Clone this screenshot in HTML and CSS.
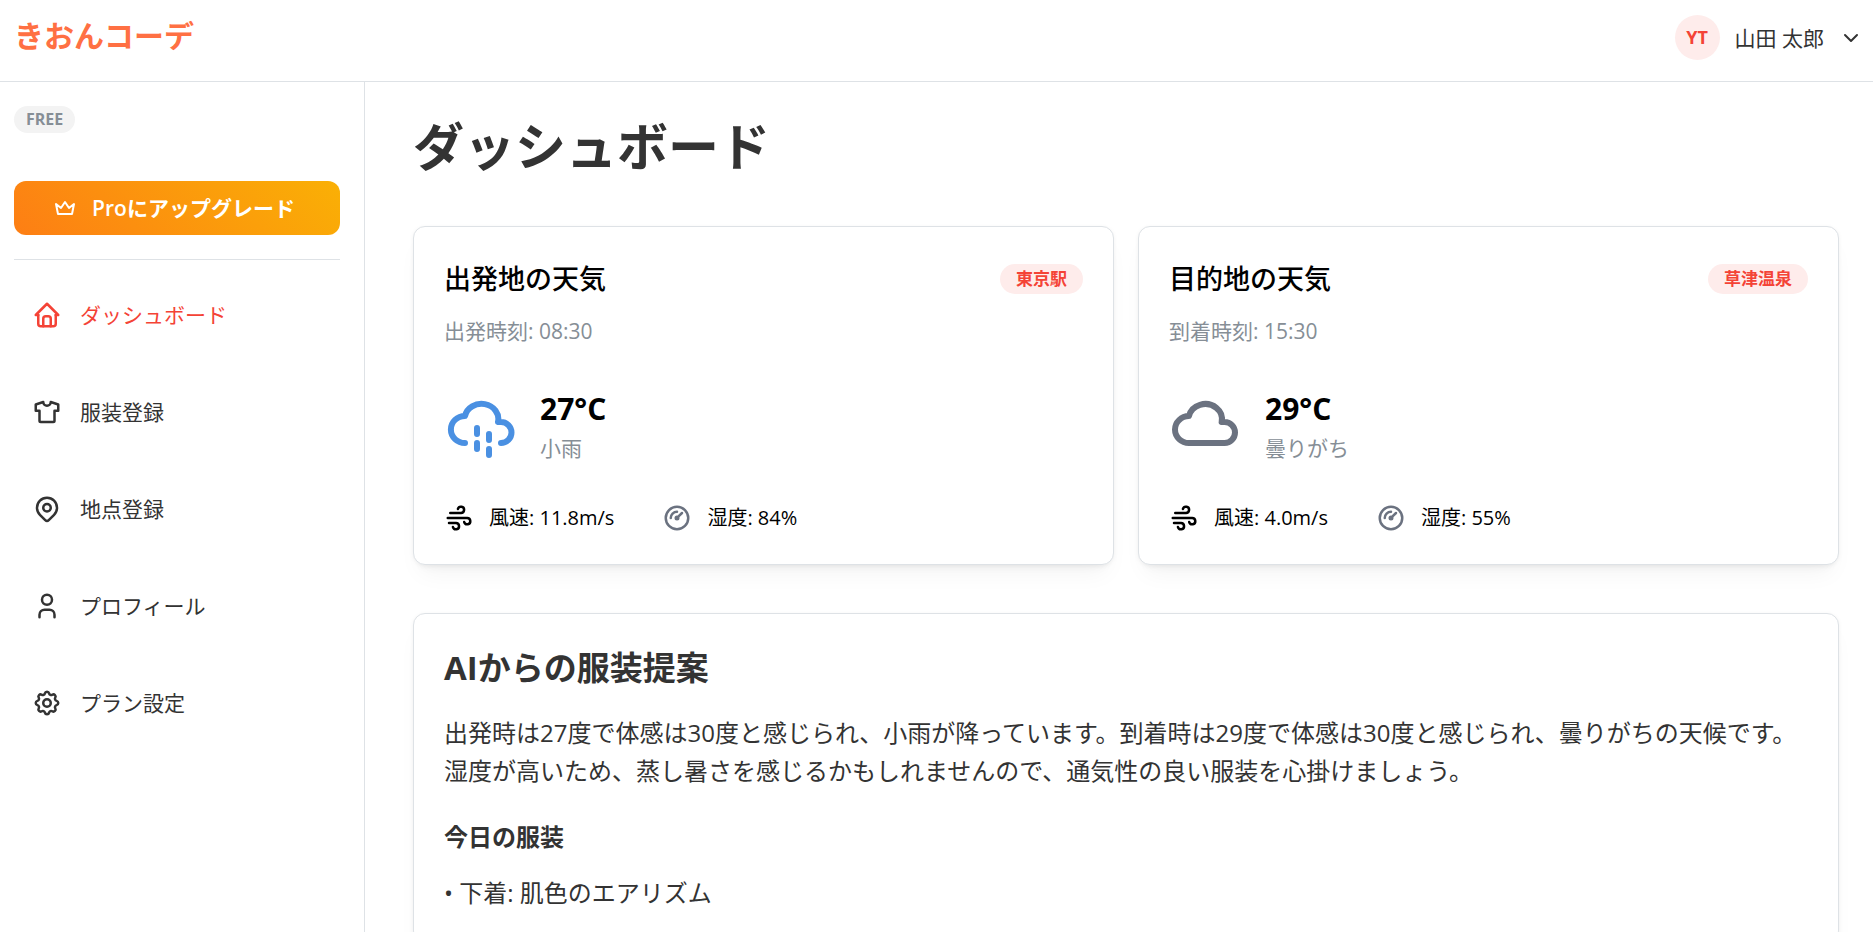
FILE: index.html
```html
<!DOCTYPE html>
<html lang="ja">
<head>
    <meta charset="UTF-8">
    <meta name="viewport" content="width=device-width, initial-scale=1.0">
    <title>きおんコーデ</title>
    <link rel="stylesheet" href="styles.css">
</head>
<body>

<header class="header">
    <a class="logo" href="#">きおんコーデ</a>
    <button class="user-menu" type="button">
        <span class="avatar">YT</span>
        <span class="user-name">山田 太郎</span>
        <svg class="icon icon-sm" viewBox="0 0 24 24"><path d="M6 9l6 6l6 -6"/></svg>
    </button>
</header>

<div class="layout">
    <aside class="sidebar">
        <span class="badge badge-plan">FREE</span>
        <button class="upgrade-button" type="button">
            <svg class="icon icon-sm" viewBox="0 0 24 24"><path d="M12 6l4 6l5 -4l-2 10h-14l-2 -10l5 4z"/></svg>
            Proにアップグレード
        </button>
        <hr class="divider">
        <nav class="nav">
            <a class="nav-link active" href="#">
                <svg class="icon" viewBox="0 0 24 24">
                    <path d="M5 12l-2 0l9 -9l9 9l-2 0"/>
                    <path d="M5 12v7a2 2 0 0 0 2 2h10a2 2 0 0 0 2 -2v-7"/>
                    <path d="M9 21v-6a2 2 0 0 1 2 -2h2a2 2 0 0 1 2 2v6"/>
                </svg>
                ダッシュボード
            </a>
            <a class="nav-link" href="#">
                <svg class="icon" viewBox="0 0 24 24">
                    <path d="M15 4l6 2v5h-3v8a1 1 0 0 1 -1 1h-10a1 1 0 0 1 -1 -1v-8h-3v-5l6 -2a3 3 0 0 0 6 0"/>
                </svg>
                服装登録
            </a>
            <a class="nav-link" href="#">
                <svg class="icon" viewBox="0 0 24 24">
                    <path d="M9 11a3 3 0 1 0 6 0a3 3 0 0 0 -6 0"/>
                    <path d="M17.657 16.657l-4.243 4.243a2 2 0 0 1 -2.827 0l-4.244 -4.243a8 8 0 1 1 11.314 0z"/>
                </svg>
                地点登録
            </a>
            <a class="nav-link" href="#">
                <svg class="icon" viewBox="0 0 24 24">
                    <path d="M8 7a4 4 0 1 0 8 0a4 4 0 0 0 -8 0"/>
                    <path d="M6 21v-2a4 4 0 0 1 4 -4h4a4 4 0 0 1 4 4v2"/>
                </svg>
                プロフィール
            </a>
            <a class="nav-link" href="#">
                <svg class="icon" viewBox="0 0 24 24">
                    <path d="M10.325 4.317c.426 -1.756 2.924 -1.756 3.35 0a1.724 1.724 0 0 0 2.573 1.066c1.543 -.94 3.31 .826 2.37 2.37a1.724 1.724 0 0 0 1.065 2.572c1.756 .426 1.756 2.924 0 3.35a1.724 1.724 0 0 0 -1.066 2.573c.94 1.543 -.826 3.31 -2.37 2.37a1.724 1.724 0 0 0 -2.572 1.065c-.426 1.756 -2.924 1.756 -3.35 0a1.724 1.724 0 0 0 -2.573 -1.066c-1.543 .94 -3.31 -.826 -2.37 -2.37a1.724 1.724 0 0 0 -1.065 -2.572c-1.756 -.426 -1.756 -2.924 0 -3.35a1.724 1.724 0 0 0 1.066 -2.573c-.94 -1.543 .826 -3.31 2.37 -2.37c1 .608 2.296 .07 2.572 -1.065z"/>
                    <path d="M9 12a3 3 0 1 0 6 0a3 3 0 0 0 -6 0"/>
                </svg>
                プラン設定
            </a>
        </nav>
    </aside>

    <main class="main">
        <h1>ダッシュボード</h1>

        <div class="weather-grid">
            <section class="card">
                <div class="card-head">
                    <h2 class="card-title">出発地の天気</h2>
                    <span class="badge">東京駅</span>
                </div>
                <p class="dimmed">出発時刻: 08:30</p>
                <div class="weather">
                    <svg class="icon icon-weather rain" viewBox="0 0 24 24">
                        <path d="M7 18a4.6 4.4 0 0 1 0 -9a5 4.5 0 0 1 11 2h1a3.5 3.5 0 0 1 0 7"/>
                        <path d="M11 13v2m0 3v2m4 -5v2m0 3v2"/>
                    </svg>
                    <div>
                        <p class="temperature">27°C</p>
                        <p class="condition">小雨</p>
                    </div>
                </div>
                <div class="metrics">
                    <div class="metric">
                        <svg class="icon" viewBox="0 0 24 24">
                            <path d="M5 8h8.5a2.5 2.5 0 1 0 -2.34 -3.24"/>
                            <path d="M3 12h15.5a2.5 2.5 0 1 1 -2.34 3.24"/>
                            <path d="M4 16h5.5a2.5 2.5 0 1 1 -2.34 3.24"/>
                        </svg>
                        風速: 11.8m/s
                    </div>
                    <div class="metric">
                        <svg class="icon gray" viewBox="0 0 24 24">
                            <path d="M3 12a9 9 0 1 0 18 0a9 9 0 1 0 -18 0"/>
                            <path d="M11 12a1 1 0 1 0 2 0a1 1 0 1 0 -2 0"/>
                            <path d="M13.41 10.59l2.59 -2.59"/>
                            <path d="M7 12a5 5 0 0 1 5 -5"/>
                        </svg>
                        湿度: 84%
                    </div>
                </div>
            </section>

            <section class="card">
                <div class="card-head">
                    <h2 class="card-title">目的地の天気</h2>
                    <span class="badge">草津温泉</span>
                </div>
                <p class="dimmed">到着時刻: 15:30</p>
                <div class="weather">
                    <svg class="icon icon-weather gray" viewBox="0 0 24 24">
                        <path d="M6.657 18c-2.572 0 -4.657 -2.007 -4.657 -4.483c0 -2.475 2.085 -4.482 4.657 -4.482c.393 -1.762 1.794 -3.2 3.675 -3.773c1.88 -.572 3.956 -.193 5.444 1c1.488 1.19 2.162 3.007 1.77 4.769h.99c1.913 0 3.464 1.56 3.464 3.486c0 1.927 -1.551 3.487 -3.465 3.487h-11.878"/>
                    </svg>
                    <div>
                        <p class="temperature">29°C</p>
                        <p class="condition">曇りがち</p>
                    </div>
                </div>
                <div class="metrics">
                    <div class="metric">
                        <svg class="icon" viewBox="0 0 24 24">
                            <path d="M5 8h8.5a2.5 2.5 0 1 0 -2.34 -3.24"/>
                            <path d="M3 12h15.5a2.5 2.5 0 1 1 -2.34 3.24"/>
                            <path d="M4 16h5.5a2.5 2.5 0 1 1 -2.34 3.24"/>
                        </svg>
                        風速: 4.0m/s
                    </div>
                    <div class="metric">
                        <svg class="icon gray" viewBox="0 0 24 24">
                            <path d="M3 12a9 9 0 1 0 18 0a9 9 0 1 0 -18 0"/>
                            <path d="M11 12a1 1 0 1 0 2 0a1 1 0 1 0 -2 0"/>
                            <path d="M13.41 10.59l2.59 -2.59"/>
                            <path d="M7 12a5 5 0 0 1 5 -5"/>
                        </svg>
                        湿度: 55%
                    </div>
                </div>
            </section>
        </div>

        <section class="card suggestion">
            <h2>AIからの服装提案</h2>
            <p>出発時は27度で体感は30度と感じられ、小雨が降っています。到着時は29度で体感は30度と感じられ、曇りがちの天候です。<br>湿度が高いため、蒸し暑さを感じるかもしれませんので、通気性の良い服装を心掛けましょう。</p>
            <h3>今日の服装</h3>
            <p>• 下着: 肌色のエアリズム</p>
        </section>
    </main>
</div>

</body>
</html>
```
FILE: styles.css
```css
* {
    box-sizing: border-box;
}

body {
    font-family: "Open Sans", "Noto Sans CJK JP", sans-serif;
    font-size: 21px;
    line-height: 32px;
    color: #333;
    background-color: #fff;
    margin: 0;
    height: 100vh;
    display: flex;
    flex-direction: column;
    overflow: hidden;
}

h1, h2, h3, p {
    margin: 0;
}

a {
    color: inherit;
    text-decoration: none;
}

button {
    font: inherit;
    color: inherit;
    border: none;
    background: none;
    padding: 0;
    cursor: pointer;
}

.icon {
    width: 30px;
    height: 30px;
    flex: none;
    fill: none;
    stroke: currentColor;
    stroke-width: 2;
    stroke-linecap: round;
    stroke-linejoin: round;
}

.icon-sm {
    width: 24px;
    height: 24px;
}

.icon-weather {
    width: 72px;
    height: 72px;
}

.rain {
    color: #4a90e2;
}

.gray {
    color: #6b7280;
}

/* Header */
.header {
    display: flex;
    justify-content: space-between;
    align-items: flex-start;
    padding: 15px 10px 21px 14px;
    border-bottom: 1px solid #dee2e6;
}

.logo {
    font-size: 30px;
    line-height: 42px;
    font-weight: bold;
    color: #ff7043;
}

.user-menu {
    display: flex;
    align-items: center;
    gap: 15px;
}

.avatar {
    width: 45px;
    height: 45px;
    border-radius: 50%;
    background-color: #feeceb;
    color: #f44336;
    font-size: 18px;
    line-height: 45px;
    font-weight: bold;
    text-align: center;
}

/* Sidebar */
.layout {
    display: flex;
    flex: 1;
    min-height: 0;
}

.sidebar {
    width: 365px;
    flex: none;
    display: flex;
    flex-direction: column;
    padding: 24px 24px 24px 14px;
    border-right: 1px solid #dee2e6;
}

.badge {
    padding: 0 16px;
    border-radius: 15px;
    background-color: #feeceb;
    color: #f44336;
    font-size: 17px;
    line-height: 30px;
    font-weight: bold;
}

.badge-plan {
    align-self: flex-start;
    padding: 0 12px;
    background-color: #f3f3f3;
    color: #868e96;
    font-size: 16px;
    line-height: 27px;
}

.upgrade-button {
    display: flex;
    justify-content: center;
    align-items: center;
    gap: 15px;
    height: 54px;
    margin-top: 48px;
    padding-right: 6px;
    border-radius: 12px;
    background: linear-gradient(45deg, #fd7e14, #fab005);
    color: #fff;
    font-weight: 600;
}

.divider {
    width: 100%;
    margin: 24px 0 23px;
    border: none;
    border-top: 1px solid #dee2e6;
}

.nav {
    display: flex;
    flex-direction: column;
    gap: 33px;
}

.nav-link {
    display: flex;
    align-items: center;
    gap: 18px;
    padding: 16px 18px;
}

.nav-link.active {
    color: #f44336;
}

/* Main */
.main {
    flex: 1;
    min-width: 0;
    padding: 32px 34px 32px 48px;
    overflow-y: auto;
    scrollbar-width: none;
}

h1 {
    font-size: 51px;
    line-height: 64px;
    margin-bottom: 48px;
}

.weather-grid {
    display: grid;
    grid-template-columns: 1fr 1fr;
    gap: 24px;
    margin-bottom: 48px;
}

.card {
    padding: 30px;
    border: 1px solid #dee2e6;
    border-radius: 12px;
    background-color: #fff;
    box-shadow: 0 1px 4px rgba(0, 0, 0, 0.05), 0 15px 24px -8px rgba(0, 0, 0, 0.05), 0 10px 10px -8px rgba(0, 0, 0, 0.04);
}

.weather-grid .card {
    color: #000;
}

.card-head {
    display: flex;
    justify-content: space-between;
    align-items: center;
    margin-bottom: 14px;
}

.card-title {
    font-size: 27px;
    line-height: 44px;
    font-weight: 500;
}

.weather-grid .dimmed, .condition {
    color: #868e96;
}

.weather {
    display: flex;
    align-items: center;
    gap: 24px;
    margin: 39px 0 38px;
}

.temperature {
    font-size: 30px;
    line-height: 46px;
    font-weight: bold;
}

.metrics {
    display: flex;
    gap: 48px;
    font-size: 20px;
}

.metric {
    display: flex;
    align-items: center;
    gap: 15px;
}

.suggestion {
    font-size: 24px;
    line-height: 38px;
}

.suggestion h2 {
    font-size: 33px;
    line-height: 48px;
    margin-bottom: 22px;
}

.suggestion h3 {
    font-size: 24px;
    line-height: 38px;
    margin: 28px 0 18px;
}
```
